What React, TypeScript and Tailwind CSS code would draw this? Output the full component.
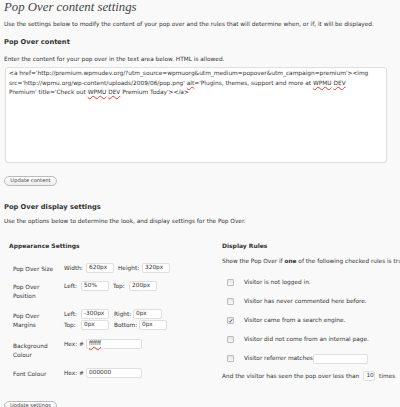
import React from "react";

function Input({ w, children, className = "" }: { w: string; children?: React.ReactNode; className?: string }) {
  return (
    <div className={`${w} h-[10px] shrink-0 bg-white border border-[#dfdfdf] rounded-[2px] pl-[2px] flex items-center text-[5.8px] text-[#333] leading-none ${className}`}>
      {children}
    </div>
  );
}

function Check({ checked = false }: { checked?: boolean }) {
  return (
    <div className="ml-[5px] w-[7px] h-[7px] border border-[#bbb] rounded-[1px] bg-gradient-to-b from-[#e6e6e6] to-[#fafafa] flex items-center justify-center shrink-0">
      {checked && (
        <svg width="6" height="6" viewBox="0 0 6 6">
          <path d="M1 3.2 L2.4 4.6 L5 1" fill="none" stroke="#3a4f88" strokeWidth="1.1" />
        </svg>
      )}
    </div>
  );
}

function Rule({ checked = false, children }: { checked?: boolean; children: React.ReactNode }) {
  return (
    <div className="flex items-center h-[19px]">
      <Check checked={checked} />
      <div className="ml-[10px] flex items-center whitespace-nowrap">{children}</div>
    </div>
  );
}

const Sp = ({ children }: { children: React.ReactNode }) => (
  <span className="underline decoration-wavy decoration-[#e33] decoration-[0.6px] underline-offset-[1px]">{children}</span>
);

export default function App() {
  return (
    <div className="w-[400px] h-[407px] overflow-hidden bg-[#f9f9f9] text-[#333] font-['DejaVu_Sans',Verdana,sans-serif] text-[5.8px] pl-[4px]">
      <div className="h-[15px] leading-[15px] font-['Liberation_Serif',Georgia,serif] italic text-[12.8px] text-[#464646] whitespace-nowrap">
        Pop Over content settings
      </div>
      <div className="mt-[1px] h-[17px] leading-[17px] whitespace-nowrap">
        Use the settings below to modify the content of your pop over and the rules that will determine when, or if, it will be displayed.
      </div>
      <div className="h-[18px] leading-[18px] font-bold text-[6.7px]">Pop Over content</div>
      <div className="h-[16px] leading-[16px] whitespace-nowrap">
        Enter the content for your pop over in the text area below. HTML is allowed.
      </div>
      <div className="ml-[1px] w-[382px] h-[96px] bg-white border border-[#dfdfdf] rounded-[3px] pl-[3px] pt-[1px] text-[5.85px] leading-[9.5px] whitespace-nowrap text-[#333]">
        <div>&lt;a href='http://premium.wpmudev.org/?utm_source=wpmuorg&amp;utm_medium=popover&amp;utm_campaign=premium'&gt;&lt;img</div>
        <div>
          src='http://wpmu.org/wp-content/uploads/2009/06/pop.png' <Sp>alt</Sp>='Plugins, themes, support and more at <Sp>WPMU</Sp> <Sp>DEV</Sp>
        </div>
        <div>
          Premium' title='Check out <Sp>WPMU</Sp> <Sp>DEV</Sp> Premium Today'&gt;&lt;/a&gt;
        </div>
      </div>
      <div className="mt-[13px] w-[53px] h-[10px] rounded-full border border-[#bbb] bg-gradient-to-b from-white to-[#ededed] flex items-center justify-center text-[#464646] text-[5.2px] whitespace-nowrap">
        Update content
      </div>
      <div className="mt-[12px] h-[18px] leading-[18px] font-bold text-[6.7px]">Pop Over display settings</div>
      <div className="h-[10px] leading-[10px] whitespace-nowrap">
        Use the options below to determine the look, and display settings for the Pop Over.
      </div>

      <div className="mt-[14px] flex h-[145px]">
        <div className="w-[218px] pl-[5px]">
          <div className="h-[12px] leading-[12px] font-bold text-[6px]">Appearance Settings</div>
          <div className="mt-[11px] pl-[4px]">
            <div className="flex h-[18px]">
              <div className="w-[51px] pt-[2px] leading-[9px]">Pop Over Size</div>
              <div className="flex items-center h-[10px]">
                <span className="w-[22px]">Width:</span>
                <Input w="w-[28px]">620px</Input>
                <span className="ml-[4px] w-[24px]">Height:</span>
                <Input w="w-[28px]">320px</Input>
              </div>
            </div>
            <div className="flex h-[28px]">
              <div className="w-[51px] pt-[2px] leading-[9px]">Pop Over<br />Position</div>
              <div className="flex items-center h-[10px]">
                <span className="w-[17px]">Left:</span>
                <Input w="w-[28px]">50%</Input>
                <span className="ml-[4px] w-[16px]">Top:</span>
                <Input w="w-[28px]">200px</Input>
              </div>
            </div>
            <div className="flex h-[30px]">
              <div className="w-[51px] pt-[3px] leading-[9px]">Pop Over<br />Margins</div>
              <div className="flex flex-col gap-[1px]">
                <div className="flex items-center h-[10px]">
                  <span className="w-[17px]">Left:</span>
                  <Input w="w-[28px]">-300px</Input>
                  <span className="ml-[5px] w-[19px]">Right:</span>
                  <Input w="w-[29px]">0px</Input>
                </div>
                <div className="flex items-center h-[10px]">
                  <span className="w-[17px]">Top:</span>
                  <Input w="w-[28px]">0px</Input>
                  <span className="ml-[5px] w-[25px]">Bottom:</span>
                  <Input w="w-[28px]">0px</Input>
                </div>
              </div>
            </div>
            <div className="flex h-[29px]">
              <div className="w-[51px] pt-[3px] leading-[9px]">Background<br />Colour</div>
              <div className="flex items-center h-[10px]">
                <span className="w-[22px]">Hex: #</span>
                <Input w="w-[56px]"><Sp>ffffff</Sp></Input>
              </div>
            </div>
            <div className="flex h-[10px]">
              <div className="w-[51px] pt-[2px] leading-[9px]">Font Colour</div>
              <div className="flex items-center h-[10px]">
                <span className="w-[22px]">Hex: #</span>
                <Input w="w-[56px]">000000</Input>
              </div>
            </div>
          </div>
        </div>

        <div className="flex-1 overflow-hidden">
          <div className="h-[12px] leading-[12px] font-bold text-[6px]">Display Rules</div>
          <div className="mt-[4px] h-[10px] leading-[10px] whitespace-nowrap">
            Show the Pop Over if <b>one</b> of the following checked rules is true:
          </div>
          <div className="mt-[7px]">
            <Rule>Visitor is not logged in.</Rule>
            <Rule>Visitor has never commented here before.</Rule>
            <Rule checked>Visitor came from a search engine.</Rule>
            <Rule>Visitor did not come from an internal page.</Rule>
            <Rule>
              <span className="w-[69px] shrink-0">Visitor referrer matches</span>
              <Input w="w-[55px]" className="h-[9px]" />
            </Rule>
          </div>
          <div className="flex items-center h-[16px] whitespace-nowrap">
            <span>And the visitor has seen the pop over less than</span>
            <Input w="w-[12px]" className="ml-[4px] h-[9px] justify-center pl-0">10</Input>
            <span className="ml-[4px]">times</span>
          </div>
        </div>
      </div>

      <div className="mt-[16px] w-[53px] h-[10px] rounded-full border border-[#bbb] bg-gradient-to-b from-white to-[#ededed] flex items-center justify-center text-[#464646] text-[5.2px] whitespace-nowrap">
        Update settings
      </div>
    </div>
  );
}
